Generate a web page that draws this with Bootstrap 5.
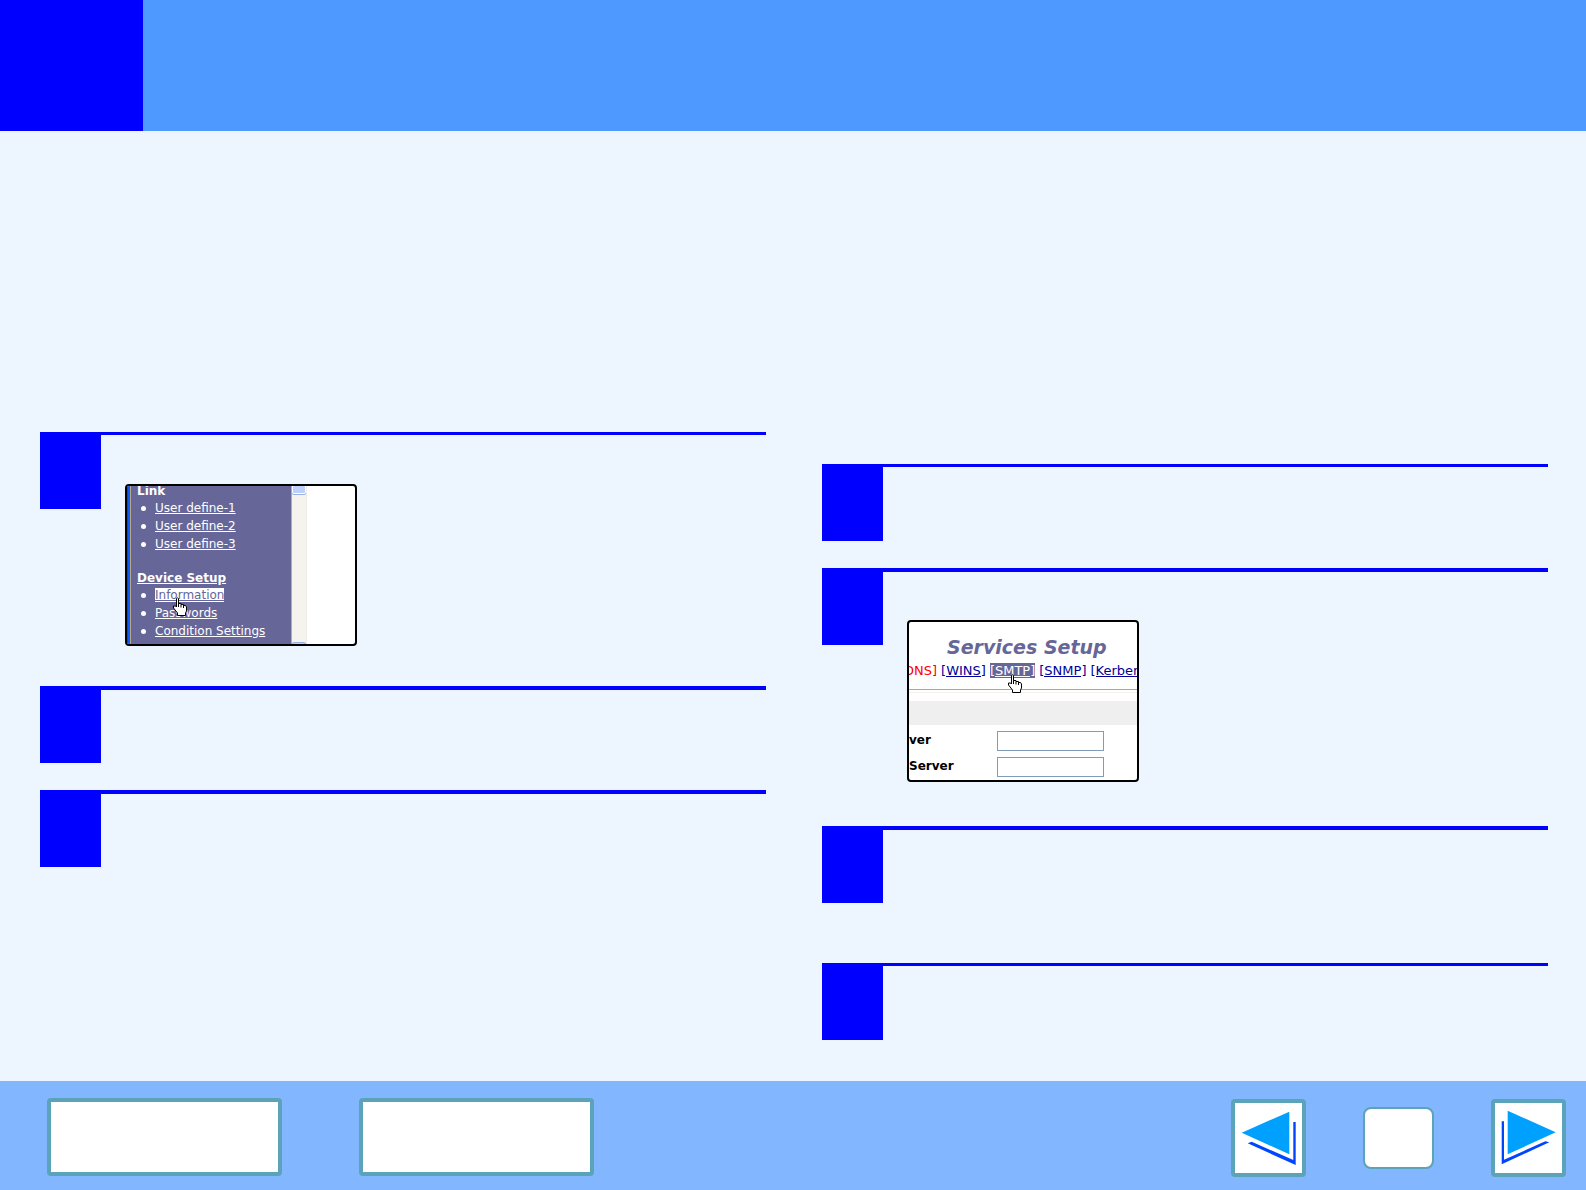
<!DOCTYPE html>
<html lang="en">
<head>
<meta charset="utf-8">
<meta name="viewport" content="width=device-width, initial-scale=1">
<title>Services Setup</title>
<link rel="stylesheet" href="https://cdn.jsdelivr.net/npm/bootstrap@5.3.0/dist/css/bootstrap.min.css">
<style>
body{background:#edf5ff;font-family:"DejaVu Sans",Verdana,sans-serif;color:#000}
.top-band{height:131px;background:#4d99ff}
.top-mark{width:143px;background:#00f}
.guide{padding:0 38px 0 40px;gap:56px}
.guide-left{padding-top:301px}
.guide-right{padding-top:333px}
.step{border-top:4px solid #00f;gap:24px}
.step-thin{border-top-width:3px}
.step-num{width:61px;height:73px;background:#00f}
.step-thin .step-num{height:74px}
.gap-step{margin-bottom:27px}
.gap-shot{margin-bottom:40px}
.gap-tall{margin-bottom:44px}
.gap-wide{margin-bottom:60px}
.shot{width:232px;height:162px;margin-top:48px;border:2px solid #000;border-radius:4px;background:#fff;overflow:hidden}
.shot-thin{margin-top:49px}
.edge{width:4px;background:#0a5cff;border-left:1px solid #0a46c8;border-right:1px solid #b5a88c}
.menu{width:160px;background:#669;color:#fff;font-size:12px;line-height:18px;padding-left:6px}
.menu a{color:#fff}
.menu ul{padding-left:18px;margin:1px 0 0;list-style:none}
.menu li{position:relative}
.menu li::before{content:"";position:absolute;left:-14px;top:7px;width:5px;height:5px;border-radius:50%;background:#fff}
.menu-title{font-weight:700;line-height:13px;margin-top:-1px}
.menu-link{line-height:14px;margin-top:18px}
.menu .picked{background:#fff;color:#669}
.rail{width:16px;background:#f4f3ee;border-left:1px solid #aab;border-right:1px solid #eeede5}
.rail i{height:9px;margin-top:-1px;background:#bdd0fb;border:1px solid #fff;border-radius:2px;box-shadow:0 1px #98b0e0}
.rail .rail-end{height:4px;margin:0 0 -2px;border-color:#98b0e0}
.hand{position:absolute;z-index:1;width:16px;height:20px}
.menu .hand{left:17px;top:11px}
.tabs .hand{left:17px;top:11px}
.set-title{color:#669;font-size:19px;line-height:24px;font-weight:700;font-style:italic;margin:13px 0 0 38px}
.tabs{font-size:13px;line-height:16px;gap:4px;margin:4px 0 0 -5px;white-space:nowrap}
.tabs a{color:#009}
.tabs .here{color:#f00;text-decoration:none}
.tabs .picked{background:#669;color:#fff}
.rule{border-top:1px solid #aca899;border-bottom:1px solid #f6f1ea;height:4px;margin-top:10px}
.band{height:24px;background:#efefef;margin-top:8px}
.field{margin-top:6px;height:20px}
.field label{width:88px;font-size:12px;line-height:19px;font-weight:700}
.field input{width:107px;height:20px;border:1px solid #7f9db9;padding:0 3px;font-size:12px}
.foot{height:109px;background:#82b6ff;padding:2px 20px 0 47px}
.foot button{background:#fff;border:4px solid #5ba3b8;border-radius:4px;padding:0}
.foot .wide-btn{width:235px;height:78px}
.foot .nav-btn{width:75px;height:78px}
.foot .nav-btn svg{display:block;width:67px;height:70px}
.foot .page-btn{width:71px;height:62px;border-width:2px;border-radius:8px}
.foot-left{gap:77px}
.foot-right{gap:57px;padding-top:2px}
</style>
<script src="https://cdn.jsdelivr.net/npm/bootstrap@5.3.0/dist/js/bootstrap.bundle.min.js"></script>
</head>
<body class="d-flex flex-column min-vh-100">
<svg class="d-none" xmlns="http://www.w3.org/2000/svg">
  <symbol id="hand" viewBox="0 0 16 20">
    <path d="M4.500 1.500q1.500-1.500 2 0V6.500h2.500v1h2.500v1h2l1 1.500v4l-1 2v2.500h-8v-2.500l-4-5v-2h2l1 1z" fill="#fff" stroke="#000"/>
    <path d="M6.500 6v4M9 7.500v3M11.500 8v3" stroke="#000" fill="none"/>
  </symbol>
</svg>

<header class="top-band d-flex"><div class="top-mark"></div></header>

<main class="guide d-flex flex-grow-1">
  <section class="guide-left flex-fill w-50">
    <article class="step step-thin gap-shot d-flex">
      <div class="step-num"></div>
      <div class="shot shot-thin d-flex">
        <div class="edge flex-shrink-0"></div>
        <nav class="menu flex-shrink-0" aria-label="Device menu">
          <div class="menu-title">Link</div>
          <ul>
            <li><a href="#">User define-1</a></li>
            <li><a href="#">User define-2</a></li>
            <li><a href="#">User define-3</a></li>
          </ul>
          <div class="menu-title menu-link"><a href="#">Device Setup</a></div>
          <ul>
            <li><a class="picked" href="#">Information</a><svg class="hand" aria-hidden="true"><use href="#hand"/></svg></li>
            <li><a href="#">Passwords</a></li>
            <li><a href="#">Condition Settings</a></li>
          </ul>
        </nav>
        <div class="rail d-flex flex-column justify-content-between"><i></i><i class="rail-end"></i></div>
      </div>
    </article>
    <article class="step gap-step d-flex"><div class="step-num"></div></article>
    <article class="step d-flex"><div class="step-num"></div></article>
  </section>

  <section class="guide-right flex-fill w-50">
    <article class="step step-thin gap-step d-flex"><div class="step-num"></div></article>
    <article class="step gap-tall d-flex">
      <div class="step-num"></div>
      <div class="shot">
        <h1 class="set-title">Services Setup</h1>
        <nav class="tabs d-flex" aria-label="Services">
          <a class="here" href="#">DNS]</a>
          <a href="#">[WINS]</a>
          <span class="position-relative"><a class="picked" href="#">[SMTP]</a><svg class="hand" aria-hidden="true"><use href="#hand"/></svg></span>
          <a href="#">[SNMP]</a>
          <a href="#">[Kerber</a>
        </nav>
        <div class="rule"></div>
        <div class="band"></div>
        <div class="field d-flex"><label for="srv1">ver</label><input id="srv1" type="text"></div>
        <div class="field d-flex"><label for="srv2">Server</label><input id="srv2" type="text"></div>
      </div>
    </article>
    <article class="step gap-wide d-flex"><div class="step-num"></div></article>
    <article class="step step-thin d-flex"><div class="step-num"></div></article>
  </section>
</main>

<footer class="foot d-flex align-items-center justify-content-between">
  <div class="foot-left d-flex">
    <button class="wide-btn" type="button"></button>
    <button class="wide-btn" type="button"></button>
  </div>
  <div class="foot-right d-flex align-items-center">
    <button class="nav-btn" type="button" aria-label="Previous"><svg viewBox="4 4 67 70"><path fill="#00a0ff" d="M10.700 33.700 58.300 12.700V55.300z"/><path fill="#0046ff" d="M16.700 44.300 20.700 42.700 62.300 61V23H64.700V66z"/></svg></button>
    <button class="page-btn" type="button"></button>
    <button class="nav-btn" type="button" aria-label="Next"><svg viewBox="4 4 67 70"><path fill="#00a0ff" d="M64.700 33.300 16.700 11.700V55.300z"/><path fill="#0046ff" d="M58.300 43.300 54.300 42.300 13 60.700V22.300H10.700V65.300z"/></svg></button>
  </div>
</footer>
</body>
</html>
